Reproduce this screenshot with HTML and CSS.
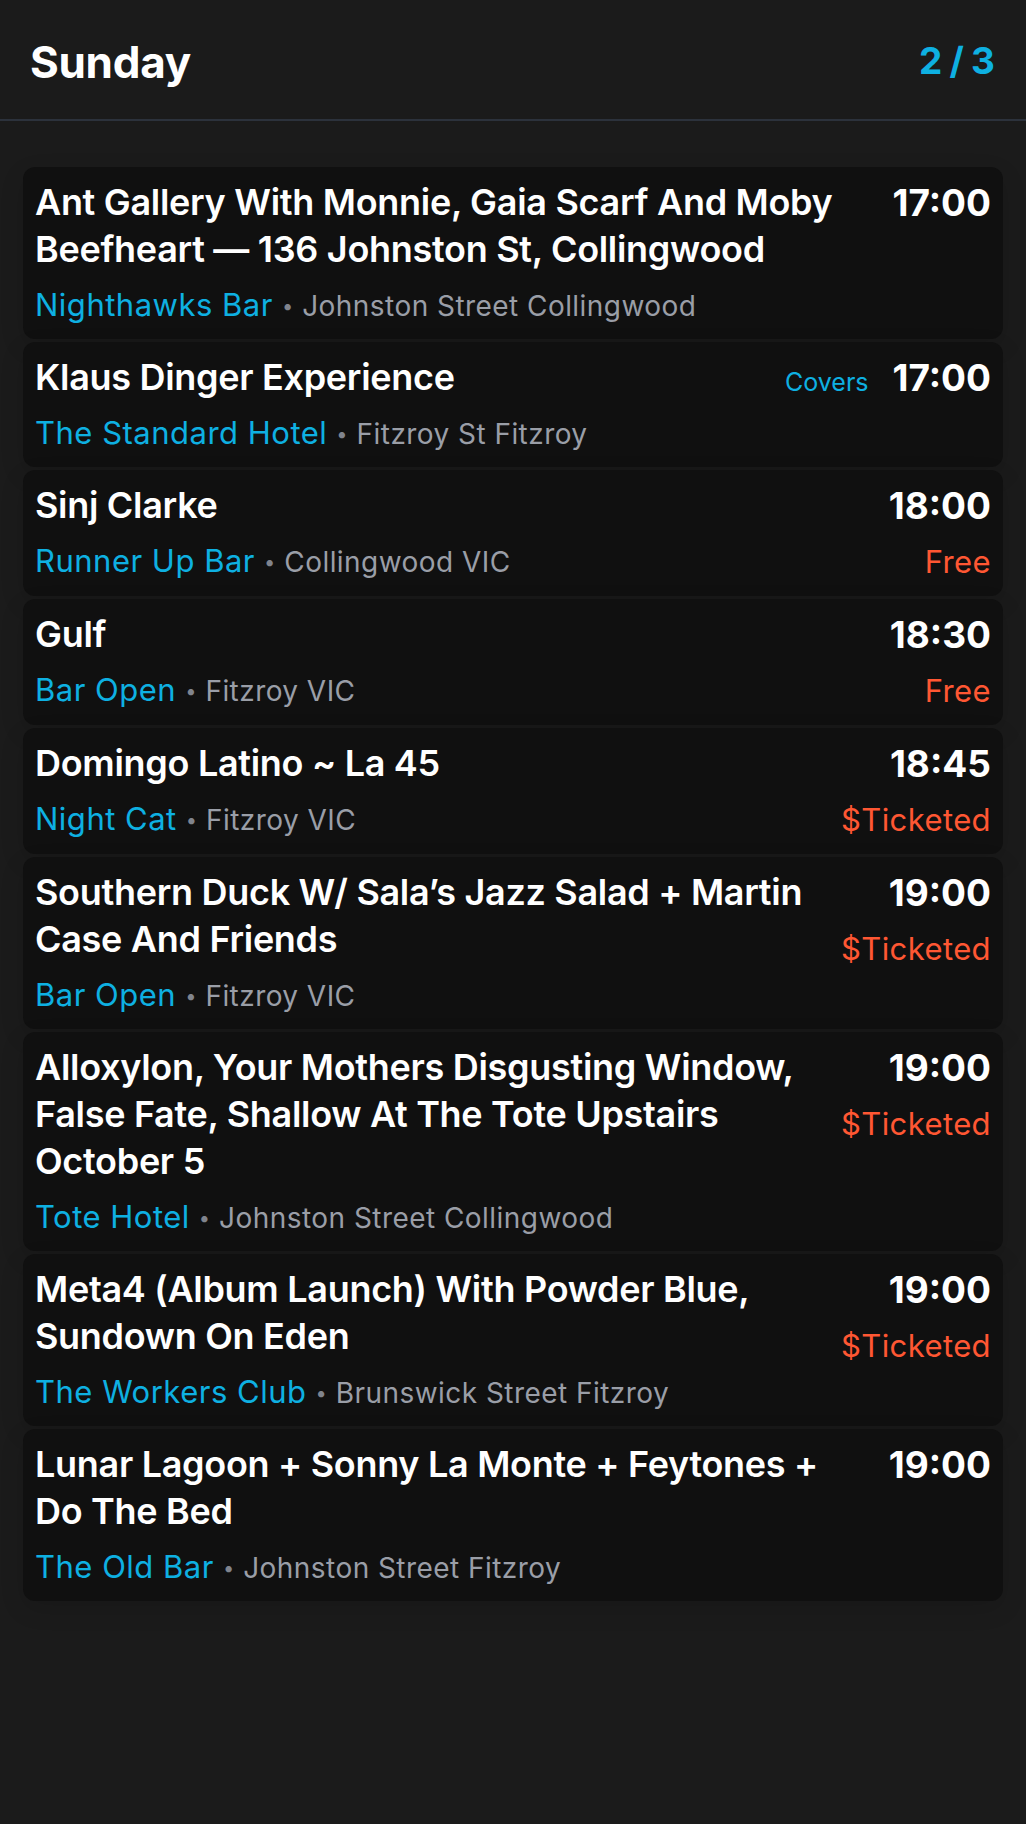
FILE: index.html
```html
<!DOCTYPE html>
<html lang="en">
<head>
<meta charset="utf-8">
<title>Sunday</title>
<link rel="stylesheet" href="styles.css">
</head>
<body>
<header class="topbar">
  <h1 class="day">Sunday</h1>
  <div class="pager">2 / 3</div>
</header>
<main class="list">
  <article class="card">
    <div class="main">
      <div class="title">Ant Gallery With Monnie, Gaia Scarf And Moby Beefheart — 136 Johnston St, Collingwood</div>
      <div class="where"><span class="venue">Nighthawks Bar</span><span class="dot">•</span><span class="loc">Johnston Street Collingwood</span></div>
    </div>
    <div class="side"><div class="row"><span class="time">17:00</span></div></div>
  </article>
  <article class="card">
    <div class="main">
      <div class="title">Klaus Dinger Experience</div>
      <div class="where"><span class="venue">The Standard Hotel</span><span class="dot">•</span><span class="loc">Fitzroy St Fitzroy</span></div>
    </div>
    <div class="side"><div class="row"><span class="tag">Covers</span><span class="time">17:00</span></div></div>
  </article>
  <article class="card">
    <div class="main">
      <div class="title">Sinj Clarke</div>
      <div class="where"><span class="venue">Runner Up Bar</span><span class="dot">•</span><span class="loc">Collingwood VIC</span></div>
    </div>
    <div class="side"><div class="row"><span class="time">18:00</span></div><div class="price">Free</div></div>
  </article>
  <article class="card">
    <div class="main">
      <div class="title">Gulf</div>
      <div class="where"><span class="venue">Bar Open</span><span class="dot">•</span><span class="loc">Fitzroy VIC</span></div>
    </div>
    <div class="side"><div class="row"><span class="time">18:30</span></div><div class="price">Free</div></div>
  </article>
  <article class="card">
    <div class="main">
      <div class="title">Domingo Latino ~ La 45</div>
      <div class="where"><span class="venue">Night Cat</span><span class="dot">•</span><span class="loc">Fitzroy VIC</span></div>
    </div>
    <div class="side"><div class="row"><span class="time">18:45</span></div><div class="price">$Ticketed</div></div>
  </article>
  <article class="card">
    <div class="main">
      <div class="title">Southern Duck W/ Sala’s Jazz Salad + Martin Case And Friends</div>
      <div class="where"><span class="venue">Bar Open</span><span class="dot">•</span><span class="loc">Fitzroy VIC</span></div>
    </div>
    <div class="side"><div class="row"><span class="time">19:00</span></div><div class="price">$Ticketed</div></div>
  </article>
  <article class="card">
    <div class="main">
      <div class="title">Alloxylon, Your Mothers Disgusting Window, False Fate, Shallow At The Tote Upstairs October 5</div>
      <div class="where"><span class="venue">Tote Hotel</span><span class="dot">•</span><span class="loc">Johnston Street Collingwood</span></div>
    </div>
    <div class="side"><div class="row"><span class="time">19:00</span></div><div class="price">$Ticketed</div></div>
  </article>
  <article class="card">
    <div class="main">
      <div class="title">Meta4 (Album Launch) With Powder Blue, Sundown On Eden</div>
      <div class="where"><span class="venue">The Workers Club</span><span class="dot">•</span><span class="loc">Brunswick Street Fitzroy</span></div>
    </div>
    <div class="side"><div class="row"><span class="time">19:00</span></div><div class="price">$Ticketed</div></div>
  </article>
  <article class="card">
    <div class="main">
      <div class="title">Lunar Lagoon + Sonny La Monte + Feytones + Do The Bed</div>
      <div class="where"><span class="venue">The Old Bar</span><span class="dot">•</span><span class="loc">Johnston Street Fitzroy</span></div>
    </div>
    <div class="side"><div class="row"><span class="time">19:00</span></div></div>
  </article>
</main>
</body>
</html>
```
FILE: styles.css
```css
html, body {
  margin: 0;
  padding: 0;
  background: #1b1b1b;
  min-height: 100%;
}
body {
  font-family: Inter, "Noto Sans", "Liberation Sans", sans-serif;
  color: #ffffff;
  -webkit-font-smoothing: antialiased;
}
.topbar {
  height: 121px;
  box-sizing: border-box;
  padding: 0 31px 0 30px;
  display: flex;
  align-items: center;
  justify-content: space-between;
  border-bottom: 2px solid #2c323c;
}
.day {
  margin: 0;
  font-size: 44px;
  font-weight: 700;
  letter-spacing: -0.3px;
  color: #ffffff;
  position: relative;
  top: 2px;
}
.pager {
  font-size: 37px;
  font-weight: 700;
  color: #0eb0e2;
  word-spacing: -1.5px;
  position: relative;
  top: 1px;
}
.list {
  padding: 46px 23px 40px 23px;
  display: flex;
  flex-direction: column;
  gap: 3.5px;
}
.card {
  background: #101010;
  border-radius: 12px;
  padding: 12px 12px 12px 12px;
  display: flex;
  gap: 24px;
  box-shadow: 0 8px 24px rgba(0, 0, 0, 0.12);
}
.main {
  flex: 1;
  min-width: 0;
}
.title {
  font-size: 36px;
  line-height: 47px;
  font-weight: 600;
  color: #ffffff;
  letter-spacing: -0.3px;
}
.where {
  margin-top: 9.5px;
  font-size: 31px;
  line-height: 44px;
  white-space: nowrap;
}
.where span {
  line-height: 1;
}
.venue {
  font-size: 31px;
  letter-spacing: 0.5px;
  color: #0eb0e2;
}
.dot {
  font-size: 20px;
  color: #80848d;
  margin: 0 9px;
  position: relative;
  top: -3px;
}
.loc {
  font-size: 28px;
  letter-spacing: 0.45px;
  color: #9a9ea7;
}
.side {
  flex-shrink: 0;
  display: flex;
  flex-direction: column;
  align-items: flex-end;
}
.row {
  display: flex;
  align-items: baseline;
  gap: 24px;
  line-height: 47px;
}
.time {
  font-size: 37px;
  font-weight: 700;
  color: #ffffff;
}
.tag {
  font-size: 25px;
  color: #0eb0e2;
}
.price {
  margin-top: 9.5px;
  font-size: 31px;
  letter-spacing: 0.4px;
  line-height: 45px;
  color: #ff5733;
}
```
